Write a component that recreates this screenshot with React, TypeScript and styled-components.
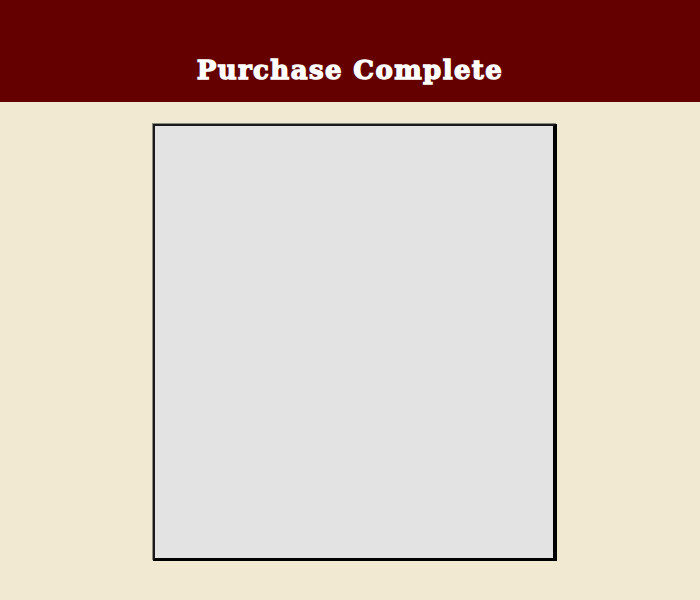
import styled, { createGlobalStyle } from "styled-components";

const GlobalStyle = createGlobalStyle`
  body {
    margin: 0;
    background-color: #f2e9d3;
    font-family: "DejaVu Serif", serif;
  }
`;

const Header = styled.header`
  align-items: flex-end;
  background-color: #640000;
  display: flex;
  height: 102px;
  justify-content: center;
  box-sizing: border-box;
  padding-bottom: 17px;

  h1 {
    color: #ffffff;
    font-family: "DejaVu Serif", serif;
    font-size: 26px;
    font-weight: 900;
    letter-spacing: 1.4px;
    margin: 0;
    -webkit-text-stroke: 1.3px #ffffff;
  }
`;

const Main = styled.main`
  display: flex;
  justify-content: center;
  padding: 22px 0 40px 10px;
`;

const ReceiptBox = styled.section`
  background-color: #e3e3e3;
  border-style: solid;
  border-color: #1a1a1a #000 #000 #1a1a1a;
  border-width: 2px 4px 3px 2px;
  box-shadow: -1px -1px 0 #8c8a80;
  height: 432px;
  width: 398px;
`;

function App() {
  return (
    <>
      <GlobalStyle />
      <Header>
        <h1>Purchase Complete</h1>
      </Header>
      <Main>
        <ReceiptBox />
      </Main>
    </>
  );
}

export default App;
